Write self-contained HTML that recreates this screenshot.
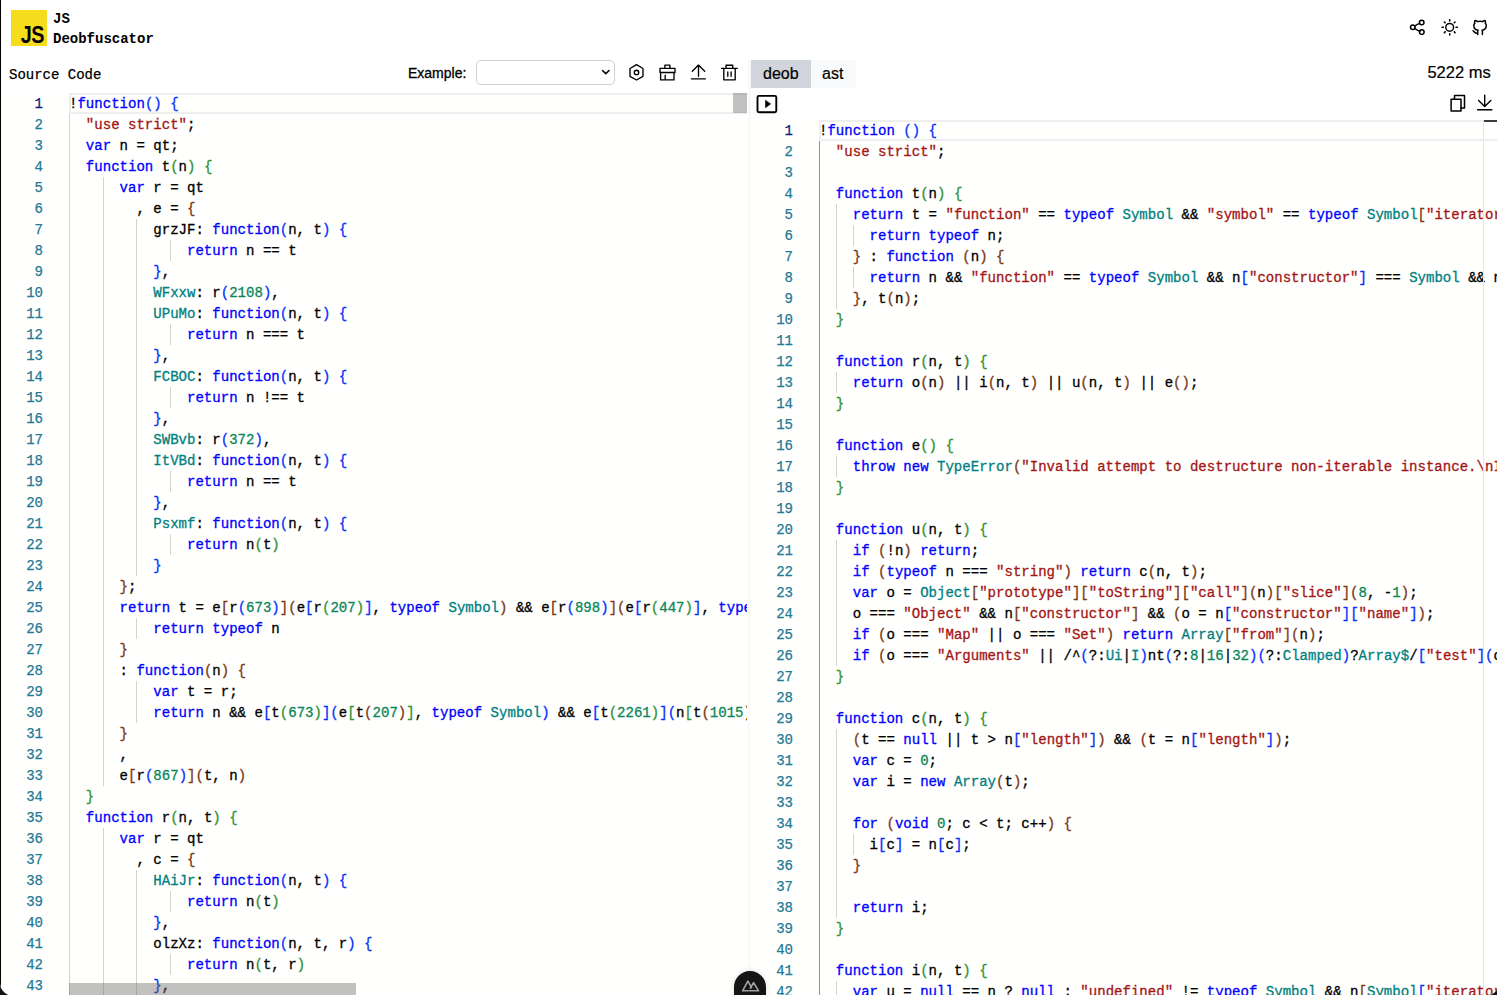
<!DOCTYPE html>
<html><head><meta charset="utf-8">
<style>
html,body{margin:0;padding:0;}
body{width:1497px;height:995px;overflow:hidden;background:#141414;position:relative;font-family:"Liberation Sans",sans-serif;}
#win{position:absolute;left:0;top:0;width:1498.7px;height:995.5px;background:#fff;border-bottom-left-radius:15px 13px;border-bottom-right-radius:15px 13px;overflow:hidden;}
.abs{position:absolute;}
.mono{font-family:"Liberation Mono",monospace;}
#logo{left:11px;top:10px;width:36px;height:36px;background:#f5dd1e;}
#logo span{position:absolute;right:3px;bottom:-1px;font:bold 23px/1 "Liberation Sans",sans-serif;color:#000;letter-spacing:-0.5px;transform:scaleX(0.86);transform-origin:right bottom;}
#title{left:53px;top:9px;font:bold 14px/20px "Liberation Mono",monospace;color:#000;}
.ed{position:absolute;overflow:hidden;background:#fffffe;font:14.05px/21px "Liberation Mono",monospace;}
.ed .ln{position:absolute;margin-top:1px;left:0;width:43px;text-align:right;color:#237893;height:21px;-webkit-text-stroke:0.25px currentColor;}
.ed .ln.act{color:#0b216f;}
.ed .cur{position:absolute;left:69px;top:0;right:0;height:17px;border:2px solid #eeeeee;border-right:0;}
.ed .gd{position:absolute;width:1px;height:21px;background:#d3d3d3;}
.ed .ga{background:#939393;}
.ed .cl{position:absolute;margin-top:1px;left:69px;white-space:pre;height:21px;color:#000;-webkit-text-stroke:0.3px currentColor;}
.ed i{font-style:normal;}
.c0000ff{color:#0000ff}.ca31515{color:#a31515}.c098658{color:#098658}.c008080{color:#008080}
.c0431fa{color:#0431fa}.c319331{color:#319331}.c7b3814{color:#7b3814}
#edL{left:0;top:93px;width:747px;height:903px;}
#edR{left:750px;top:120px;width:748px;height:876px;}
#vslL{left:733px;top:0;width:14px;height:20px;background:rgba(100,100,100,.4);}
#hslL{left:69px;top:890px;width:287px;height:12px;background:rgba(100,100,100,.4);}
#ovR{left:733px;top:0;width:1px;height:876px;background:#e6e6e6;}
#ovMark{left:734px;top:0;width:14px;height:2px;background:#3c3c3c;}
#splitter{left:748px;top:60px;width:3px;height:936px;background:#f9f9fa;}
#srcLabel{left:9px;top:65px;font:14px/20px "Liberation Mono",monospace;color:#000;-webkit-text-stroke:0.25px #000;}
#exLabel{left:408px;top:65px;font:14px/16px "Liberation Sans",sans-serif;color:#000;-webkit-text-stroke:0.3px #000;}
#sel{left:476px;top:60px;width:137px;height:23px;border:1px solid #d0d0d4;border-radius:5px;background:#fff;}
#tabs{left:751px;top:60px;width:105px;height:28px;background:#f9fafb;}
#tabDeob{left:751px;top:60px;width:60px;height:28px;background:#d1d5db;}
.tabt{font:16px/28px "Liberation Sans",sans-serif;color:#000;top:60px;-webkit-text-stroke:0.2px #000;}
#ms{right:8px;top:63px;font:16.5px/19px "Liberation Sans",sans-serif;color:#000;-webkit-text-stroke:0.2px #000;}
#devtools{left:733.7px;top:971px;width:32px;height:40px;border-radius:16px;background:#151515;box-shadow:0 0 6px rgba(0,0,0,.12);}
svg{position:absolute;overflow:visible;}
</style></head><body>
<div id="win">
  <div class="abs" style="left:0;top:0;width:1px;height:996px;background:#000;z-index:9"></div>
  <div id="logo" class="abs"><span>JS</span></div>
  <div id="title" class="abs">JS<br>Deobfuscator</div>

  <svg style="left:0;top:0" width="1497" height="60" viewBox="0 0 1497 60" fill="none" stroke="#000" stroke-width="1.4" stroke-linecap="round" stroke-linejoin="round">
    <g transform="translate(1.3,0)">
    <!-- share -->
    <circle cx="1411.5" cy="27.3" r="2.3" stroke-width="1.5"/>
    <circle cx="1420.4" cy="22.5" r="2.3" stroke-width="1.5"/>
    <circle cx="1420.5" cy="32.1" r="2.3" stroke-width="1.5"/>
    <path d="M1413.3 26.3 Q1416 24 1418.6 23.4 M1413.3 28.3 Q1416 30.6 1418.6 31.2"/>
    <!-- sun -->
    <circle cx="1448.4" cy="27.3" r="3.9" stroke-width="1.45"/>
    <path stroke-width="1.6" d="M1440.8 27.3h1.2 M1454.8 27.3h1.2 M1448.4 19.7v1.2 M1448.4 33.7v1.2 M1443.1 22l.7 .7 M1453.7 22l-.7 .7 M1443.1 32.6l.7 -.7 M1453.7 32.6l-.7 -.7"/>
    <!-- github -->
    <g transform="translate(1469.4,18.2) scale(0.78)" stroke-width="1.9">
      <path d="M9 19c-4.3 1.4 -4.3 -2.5 -6 -3m12 5v-3.5c0 -1 .1 -1.4 -.5 -2c2.8 -.3 5.5 -1.4 5.5 -6a4.6 4.6 0 0 0 -1.3 -3.2a4.2 4.2 0 0 0 -.1 -3.2s-1.1 -.3 -3.5 1.3a12.3 12.3 0 0 0 -6.2 0c-2.4 -1.6 -3.5 -1.3 -3.5 -1.3a4.2 4.2 0 0 0 -.1 3.2a4.6 4.6 0 0 0 -1.3 3.2c0 4.6 2.7 5.7 5.5 6c-.6 .6 -.6 1.2 -.5 2v3.5"/>
    </g>
  </svg>

  <div id="srcLabel" class="abs">Source Code</div>
  <div id="exLabel" class="abs">Example:</div>
  <div id="sel" class="abs"></div>
  <svg style="left:0;top:0" width="1497" height="130" viewBox="0 0 1497 130" fill="none" stroke="#000" stroke-width="1.2" stroke-linecap="round" stroke-linejoin="round">
    <!-- select chevron -->
    <path d="M602.6 70.5l3.2 3.2 3.2-3.2" stroke-width="1.6"/>
    <g transform="translate(1,0)" stroke-width="1.35">
    <!-- hex -->
    <path d="M635.5 64.6 L642 68.5 L642 76.3 L635.5 80 L629 76.3 L629 68.5 Z"/>
    <circle cx="635.5" cy="72.4" r="2.2"/>
    <!-- toolbox -->
    <path d="M663.9 68.3v-3.2h5v3.2 M659 68.3h15v4.2h-15z M659.6 72.5v7.4h13.4v-7.4 M664.2 79.9v-4.8"/>
    <!-- upload -->
    <path d="M691.3 71.3l6.2-6.2 6.2 6.2 M697.5 65.4v10.8 M690.4 78.8h14"/>
    <!-- trash -->
    <path d="M720.6 68.4h15.7 M725 68.4v-3.2h6.7v3.2 M722.8 68.4v11.4h11.4v-11.4 M726.8 72v4.2 M730.1 72v4.2"/>
    </g>
    <!-- play -->
    <rect x="757.5" y="95.9" width="18.8" height="16.4" rx="1.5" stroke-width="1.9"/>
    <path d="M765.5 100.5v7.2l5-3.6z" fill="#000" stroke-width="0.6"/>
    <g transform="translate(1.3,0)">
    <!-- copy -->
    <path d="M1453.2 99.3v-3.7h10v12.3h-3.5" stroke-width="1.5"/>
    <rect x="1449.8" y="99.3" width="9.9" height="11.8" stroke-width="1.5"/>
    <!-- download -->
    <path d="M1483.4 95.3v11.2 M1477.3 100.4l6.1 6.1 6.1-6.1 M1476.3 109.7h14.2" stroke-width="1.4"/>
    </g>
  </svg>

  <div id="tabs" class="abs"></div>
  <div id="tabDeob" class="abs"></div>
  <div class="abs tabt" style="left:763px">deob</div>
  <div class="abs tabt" style="left:822px">ast</div>
  <div id="ms" class="abs">5222 ms</div>
  <div id="splitter" class="abs"></div>

  <div id="edL" class="ed">
<div class="ln act" style="top:0px">1</div>
<div class="ln" style="top:21px">2</div>
<div class="ln" style="top:42px">3</div>
<div class="ln" style="top:63px">4</div>
<div class="ln" style="top:84px">5</div>
<div class="ln" style="top:105px">6</div>
<div class="ln" style="top:126px">7</div>
<div class="ln" style="top:147px">8</div>
<div class="ln" style="top:168px">9</div>
<div class="ln" style="top:189px">10</div>
<div class="ln" style="top:210px">11</div>
<div class="ln" style="top:231px">12</div>
<div class="ln" style="top:252px">13</div>
<div class="ln" style="top:273px">14</div>
<div class="ln" style="top:294px">15</div>
<div class="ln" style="top:315px">16</div>
<div class="ln" style="top:336px">17</div>
<div class="ln" style="top:357px">18</div>
<div class="ln" style="top:378px">19</div>
<div class="ln" style="top:399px">20</div>
<div class="ln" style="top:420px">21</div>
<div class="ln" style="top:441px">22</div>
<div class="ln" style="top:462px">23</div>
<div class="ln" style="top:483px">24</div>
<div class="ln" style="top:504px">25</div>
<div class="ln" style="top:525px">26</div>
<div class="ln" style="top:546px">27</div>
<div class="ln" style="top:567px">28</div>
<div class="ln" style="top:588px">29</div>
<div class="ln" style="top:609px">30</div>
<div class="ln" style="top:630px">31</div>
<div class="ln" style="top:651px">32</div>
<div class="ln" style="top:672px">33</div>
<div class="ln" style="top:693px">34</div>
<div class="ln" style="top:714px">35</div>
<div class="ln" style="top:735px">36</div>
<div class="ln" style="top:756px">37</div>
<div class="ln" style="top:777px">38</div>
<div class="ln" style="top:798px">39</div>
<div class="ln" style="top:819px">40</div>
<div class="ln" style="top:840px">41</div>
<div class="ln" style="top:861px">42</div>
<div class="ln" style="top:882px">43</div>
<div class="cur"></div>
<div class="gd" style="left:69.00px;top:21px"></div>
<div class="gd" style="left:69.00px;top:42px"></div>
<div class="gd" style="left:69.00px;top:63px"></div>
<div class="gd" style="left:69.00px;top:84px"></div>
<div class="gd" style="left:102.72px;top:84px"></div>
<div class="gd" style="left:69.00px;top:105px"></div>
<div class="gd" style="left:102.72px;top:105px"></div>
<div class="gd" style="left:69.00px;top:126px"></div>
<div class="gd" style="left:102.72px;top:126px"></div>
<div class="gd" style="left:136.44px;top:126px"></div>
<div class="gd" style="left:69.00px;top:147px"></div>
<div class="gd" style="left:102.72px;top:147px"></div>
<div class="gd" style="left:136.44px;top:147px"></div>
<div class="gd" style="left:170.16px;top:147px"></div>
<div class="gd" style="left:69.00px;top:168px"></div>
<div class="gd" style="left:102.72px;top:168px"></div>
<div class="gd" style="left:136.44px;top:168px"></div>
<div class="gd" style="left:69.00px;top:189px"></div>
<div class="gd" style="left:102.72px;top:189px"></div>
<div class="gd" style="left:136.44px;top:189px"></div>
<div class="gd" style="left:69.00px;top:210px"></div>
<div class="gd" style="left:102.72px;top:210px"></div>
<div class="gd" style="left:136.44px;top:210px"></div>
<div class="gd" style="left:69.00px;top:231px"></div>
<div class="gd" style="left:102.72px;top:231px"></div>
<div class="gd" style="left:136.44px;top:231px"></div>
<div class="gd" style="left:170.16px;top:231px"></div>
<div class="gd" style="left:69.00px;top:252px"></div>
<div class="gd" style="left:102.72px;top:252px"></div>
<div class="gd" style="left:136.44px;top:252px"></div>
<div class="gd" style="left:69.00px;top:273px"></div>
<div class="gd" style="left:102.72px;top:273px"></div>
<div class="gd" style="left:136.44px;top:273px"></div>
<div class="gd" style="left:69.00px;top:294px"></div>
<div class="gd" style="left:102.72px;top:294px"></div>
<div class="gd" style="left:136.44px;top:294px"></div>
<div class="gd" style="left:170.16px;top:294px"></div>
<div class="gd" style="left:69.00px;top:315px"></div>
<div class="gd" style="left:102.72px;top:315px"></div>
<div class="gd" style="left:136.44px;top:315px"></div>
<div class="gd" style="left:69.00px;top:336px"></div>
<div class="gd" style="left:102.72px;top:336px"></div>
<div class="gd" style="left:136.44px;top:336px"></div>
<div class="gd" style="left:69.00px;top:357px"></div>
<div class="gd" style="left:102.72px;top:357px"></div>
<div class="gd" style="left:136.44px;top:357px"></div>
<div class="gd" style="left:69.00px;top:378px"></div>
<div class="gd" style="left:102.72px;top:378px"></div>
<div class="gd" style="left:136.44px;top:378px"></div>
<div class="gd" style="left:170.16px;top:378px"></div>
<div class="gd" style="left:69.00px;top:399px"></div>
<div class="gd" style="left:102.72px;top:399px"></div>
<div class="gd" style="left:136.44px;top:399px"></div>
<div class="gd" style="left:69.00px;top:420px"></div>
<div class="gd" style="left:102.72px;top:420px"></div>
<div class="gd" style="left:136.44px;top:420px"></div>
<div class="gd" style="left:69.00px;top:441px"></div>
<div class="gd" style="left:102.72px;top:441px"></div>
<div class="gd" style="left:136.44px;top:441px"></div>
<div class="gd" style="left:170.16px;top:441px"></div>
<div class="gd" style="left:69.00px;top:462px"></div>
<div class="gd" style="left:102.72px;top:462px"></div>
<div class="gd" style="left:136.44px;top:462px"></div>
<div class="gd" style="left:69.00px;top:483px"></div>
<div class="gd" style="left:102.72px;top:483px"></div>
<div class="gd" style="left:69.00px;top:504px"></div>
<div class="gd" style="left:102.72px;top:504px"></div>
<div class="gd" style="left:69.00px;top:525px"></div>
<div class="gd" style="left:102.72px;top:525px"></div>
<div class="gd" style="left:136.44px;top:525px"></div>
<div class="gd" style="left:69.00px;top:546px"></div>
<div class="gd" style="left:102.72px;top:546px"></div>
<div class="gd" style="left:69.00px;top:567px"></div>
<div class="gd" style="left:102.72px;top:567px"></div>
<div class="gd" style="left:69.00px;top:588px"></div>
<div class="gd" style="left:102.72px;top:588px"></div>
<div class="gd" style="left:136.44px;top:588px"></div>
<div class="gd" style="left:69.00px;top:609px"></div>
<div class="gd" style="left:102.72px;top:609px"></div>
<div class="gd" style="left:136.44px;top:609px"></div>
<div class="gd" style="left:69.00px;top:630px"></div>
<div class="gd" style="left:102.72px;top:630px"></div>
<div class="gd" style="left:69.00px;top:651px"></div>
<div class="gd" style="left:102.72px;top:651px"></div>
<div class="gd" style="left:69.00px;top:672px"></div>
<div class="gd" style="left:102.72px;top:672px"></div>
<div class="gd" style="left:69.00px;top:693px"></div>
<div class="gd" style="left:69.00px;top:714px"></div>
<div class="gd" style="left:69.00px;top:735px"></div>
<div class="gd" style="left:102.72px;top:735px"></div>
<div class="gd" style="left:69.00px;top:756px"></div>
<div class="gd" style="left:102.72px;top:756px"></div>
<div class="gd" style="left:69.00px;top:777px"></div>
<div class="gd" style="left:102.72px;top:777px"></div>
<div class="gd" style="left:136.44px;top:777px"></div>
<div class="gd" style="left:69.00px;top:798px"></div>
<div class="gd" style="left:102.72px;top:798px"></div>
<div class="gd" style="left:136.44px;top:798px"></div>
<div class="gd" style="left:170.16px;top:798px"></div>
<div class="gd" style="left:69.00px;top:819px"></div>
<div class="gd" style="left:102.72px;top:819px"></div>
<div class="gd" style="left:136.44px;top:819px"></div>
<div class="gd" style="left:69.00px;top:840px"></div>
<div class="gd" style="left:102.72px;top:840px"></div>
<div class="gd" style="left:136.44px;top:840px"></div>
<div class="gd" style="left:69.00px;top:861px"></div>
<div class="gd" style="left:102.72px;top:861px"></div>
<div class="gd" style="left:136.44px;top:861px"></div>
<div class="gd" style="left:170.16px;top:861px"></div>
<div class="gd" style="left:69.00px;top:882px"></div>
<div class="gd" style="left:102.72px;top:882px"></div>
<div class="gd" style="left:136.44px;top:882px"></div>
<div class="cl" style="top:0px">!<i class="c0000ff">function</i><i class="c0431fa">() {</i></div>
<div class="cl" style="top:21px"><i class="ca31515">  "use strict"</i>;</div>
<div class="cl" style="top:42px"><i class="c0000ff">  var </i>n = qt;</div>
<div class="cl" style="top:63px"><i class="c0000ff">  function </i>t<i class="c319331">(</i>n<i class="c319331">) {</i></div>
<div class="cl" style="top:84px"><i class="c0000ff">      var </i>r = qt</div>
<div class="cl" style="top:105px">        , e = <i class="c7b3814">{</i></div>
<div class="cl" style="top:126px">          grzJF: <i class="c0000ff">function</i><i class="c0431fa">(</i>n, t<i class="c0431fa">) {</i></div>
<div class="cl" style="top:147px"><i class="c0000ff">              return </i>n == t</div>
<div class="cl" style="top:168px"><i class="c0431fa">          }</i>,</div>
<div class="cl" style="top:189px"><i class="c008080">          WFxxw</i>: r<i class="c0431fa">(</i><i class="c098658">2108</i><i class="c0431fa">)</i>,</div>
<div class="cl" style="top:210px"><i class="c008080">          UPuMo</i>: <i class="c0000ff">function</i><i class="c0431fa">(</i>n, t<i class="c0431fa">) {</i></div>
<div class="cl" style="top:231px"><i class="c0000ff">              return </i>n === t</div>
<div class="cl" style="top:252px"><i class="c0431fa">          }</i>,</div>
<div class="cl" style="top:273px"><i class="c008080">          FCBOC</i>: <i class="c0000ff">function</i><i class="c0431fa">(</i>n, t<i class="c0431fa">) {</i></div>
<div class="cl" style="top:294px"><i class="c0000ff">              return </i>n !== t</div>
<div class="cl" style="top:315px"><i class="c0431fa">          }</i>,</div>
<div class="cl" style="top:336px"><i class="c008080">          SWBvb</i>: r<i class="c0431fa">(</i><i class="c098658">372</i><i class="c0431fa">)</i>,</div>
<div class="cl" style="top:357px"><i class="c008080">          ItVBd</i>: <i class="c0000ff">function</i><i class="c0431fa">(</i>n, t<i class="c0431fa">) {</i></div>
<div class="cl" style="top:378px"><i class="c0000ff">              return </i>n == t</div>
<div class="cl" style="top:399px"><i class="c0431fa">          }</i>,</div>
<div class="cl" style="top:420px"><i class="c008080">          Psxmf</i>: <i class="c0000ff">function</i><i class="c0431fa">(</i>n, t<i class="c0431fa">) {</i></div>
<div class="cl" style="top:441px"><i class="c0000ff">              return </i>n<i class="c319331">(</i>t<i class="c319331">)</i></div>
<div class="cl" style="top:462px"><i class="c0431fa">          }</i></div>
<div class="cl" style="top:483px"><i class="c7b3814">      }</i>;</div>
<div class="cl" style="top:504px"><i class="c0000ff">      return </i>t = e<i class="c7b3814">[</i>r<i class="c0431fa">(</i><i class="c098658">673</i><i class="c0431fa">)</i><i class="c7b3814">](</i>e<i class="c0431fa">[</i>r<i class="c319331">(</i><i class="c098658">207</i><i class="c319331">)</i><i class="c0431fa">]</i>, <i class="c0000ff">typeof </i><i class="c008080">Symbol</i><i class="c7b3814">) </i>&amp;&amp; e<i class="c7b3814">[</i>r<i class="c0431fa">(</i><i class="c098658">898</i><i class="c0431fa">)</i><i class="c7b3814">](</i>e<i class="c0431fa">[</i>r<i class="c319331">(</i><i class="c098658">447</i><i class="c319331">)</i><i class="c0431fa">]</i>, <i class="c0000ff">typeo</i></div>
<div class="cl" style="top:525px"><i class="c0000ff">          return typeof </i>n</div>
<div class="cl" style="top:546px"><i class="c7b3814">      }</i></div>
<div class="cl" style="top:567px">      : <i class="c0000ff">function</i><i class="c7b3814">(</i>n<i class="c7b3814">) {</i></div>
<div class="cl" style="top:588px"><i class="c0000ff">          var </i>t = r;</div>
<div class="cl" style="top:609px"><i class="c0000ff">          return </i>n &amp;&amp; e<i class="c0431fa">[</i>t<i class="c319331">(</i><i class="c098658">673</i><i class="c319331">)</i><i class="c0431fa">](</i>e<i class="c319331">[</i>t<i class="c7b3814">(</i><i class="c098658">207</i><i class="c7b3814">)</i><i class="c319331">]</i>, <i class="c0000ff">typeof </i><i class="c008080">Symbol</i><i class="c0431fa">) </i>&amp;&amp; e<i class="c0431fa">[</i>t<i class="c319331">(</i><i class="c098658">2261</i><i class="c319331">)</i><i class="c0431fa">](</i>n<i class="c319331">[</i>t<i class="c7b3814">(</i><i class="c098658">1015</i><i class="c7b3814">)</i><i class="c319331">]</i></div>
<div class="cl" style="top:630px"><i class="c7b3814">      }</i></div>
<div class="cl" style="top:651px">      ,</div>
<div class="cl" style="top:672px">      e<i class="c7b3814">[</i>r<i class="c0431fa">(</i><i class="c098658">867</i><i class="c0431fa">)</i><i class="c7b3814">](</i>t, n<i class="c7b3814">)</i></div>
<div class="cl" style="top:693px"><i class="c319331">  }</i></div>
<div class="cl" style="top:714px"><i class="c0000ff">  function </i>r<i class="c319331">(</i>n, t<i class="c319331">) {</i></div>
<div class="cl" style="top:735px"><i class="c0000ff">      var </i>r = qt</div>
<div class="cl" style="top:756px">        , c = <i class="c7b3814">{</i></div>
<div class="cl" style="top:777px"><i class="c008080">          HAiJr</i>: <i class="c0000ff">function</i><i class="c0431fa">(</i>n, t<i class="c0431fa">) {</i></div>
<div class="cl" style="top:798px"><i class="c0000ff">              return </i>n<i class="c319331">(</i>t<i class="c319331">)</i></div>
<div class="cl" style="top:819px"><i class="c0431fa">          }</i>,</div>
<div class="cl" style="top:840px">          olzXz: <i class="c0000ff">function</i><i class="c0431fa">(</i>n, t, r<i class="c0431fa">) {</i></div>
<div class="cl" style="top:861px"><i class="c0000ff">              return </i>n<i class="c319331">(</i>t, r<i class="c319331">)</i></div>
<div class="cl" style="top:882px"><i class="c0431fa">          }</i>,</div>
  <div id="vslL" class="abs"></div>
  <div id="hslL" class="abs"></div>
  </div>

  <div id="edR" class="ed">
<div class="ln act" style="top:0px">1</div>
<div class="ln" style="top:21px">2</div>
<div class="ln" style="top:42px">3</div>
<div class="ln" style="top:63px">4</div>
<div class="ln" style="top:84px">5</div>
<div class="ln" style="top:105px">6</div>
<div class="ln" style="top:126px">7</div>
<div class="ln" style="top:147px">8</div>
<div class="ln" style="top:168px">9</div>
<div class="ln" style="top:189px">10</div>
<div class="ln" style="top:210px">11</div>
<div class="ln" style="top:231px">12</div>
<div class="ln" style="top:252px">13</div>
<div class="ln" style="top:273px">14</div>
<div class="ln" style="top:294px">15</div>
<div class="ln" style="top:315px">16</div>
<div class="ln" style="top:336px">17</div>
<div class="ln" style="top:357px">18</div>
<div class="ln" style="top:378px">19</div>
<div class="ln" style="top:399px">20</div>
<div class="ln" style="top:420px">21</div>
<div class="ln" style="top:441px">22</div>
<div class="ln" style="top:462px">23</div>
<div class="ln" style="top:483px">24</div>
<div class="ln" style="top:504px">25</div>
<div class="ln" style="top:525px">26</div>
<div class="ln" style="top:546px">27</div>
<div class="ln" style="top:567px">28</div>
<div class="ln" style="top:588px">29</div>
<div class="ln" style="top:609px">30</div>
<div class="ln" style="top:630px">31</div>
<div class="ln" style="top:651px">32</div>
<div class="ln" style="top:672px">33</div>
<div class="ln" style="top:693px">34</div>
<div class="ln" style="top:714px">35</div>
<div class="ln" style="top:735px">36</div>
<div class="ln" style="top:756px">37</div>
<div class="ln" style="top:777px">38</div>
<div class="ln" style="top:798px">39</div>
<div class="ln" style="top:819px">40</div>
<div class="ln" style="top:840px">41</div>
<div class="ln" style="top:861px">42</div>
<div class="cur"></div>
<div class="gd ga" style="left:69.00px;top:21px"></div>
<div class="gd ga" style="left:69.00px;top:42px"></div>
<div class="gd ga" style="left:69.00px;top:63px"></div>
<div class="gd ga" style="left:69.00px;top:84px"></div>
<div class="gd" style="left:85.86px;top:84px"></div>
<div class="gd ga" style="left:69.00px;top:105px"></div>
<div class="gd" style="left:85.86px;top:105px"></div>
<div class="gd" style="left:102.72px;top:105px"></div>
<div class="gd ga" style="left:69.00px;top:126px"></div>
<div class="gd" style="left:85.86px;top:126px"></div>
<div class="gd ga" style="left:69.00px;top:147px"></div>
<div class="gd" style="left:85.86px;top:147px"></div>
<div class="gd" style="left:102.72px;top:147px"></div>
<div class="gd ga" style="left:69.00px;top:168px"></div>
<div class="gd" style="left:85.86px;top:168px"></div>
<div class="gd ga" style="left:69.00px;top:189px"></div>
<div class="gd ga" style="left:69.00px;top:210px"></div>
<div class="gd ga" style="left:69.00px;top:231px"></div>
<div class="gd ga" style="left:69.00px;top:252px"></div>
<div class="gd" style="left:85.86px;top:252px"></div>
<div class="gd ga" style="left:69.00px;top:273px"></div>
<div class="gd ga" style="left:69.00px;top:294px"></div>
<div class="gd ga" style="left:69.00px;top:315px"></div>
<div class="gd ga" style="left:69.00px;top:336px"></div>
<div class="gd" style="left:85.86px;top:336px"></div>
<div class="gd ga" style="left:69.00px;top:357px"></div>
<div class="gd ga" style="left:69.00px;top:378px"></div>
<div class="gd ga" style="left:69.00px;top:399px"></div>
<div class="gd ga" style="left:69.00px;top:420px"></div>
<div class="gd" style="left:85.86px;top:420px"></div>
<div class="gd ga" style="left:69.00px;top:441px"></div>
<div class="gd" style="left:85.86px;top:441px"></div>
<div class="gd ga" style="left:69.00px;top:462px"></div>
<div class="gd" style="left:85.86px;top:462px"></div>
<div class="gd ga" style="left:69.00px;top:483px"></div>
<div class="gd" style="left:85.86px;top:483px"></div>
<div class="gd ga" style="left:69.00px;top:504px"></div>
<div class="gd" style="left:85.86px;top:504px"></div>
<div class="gd ga" style="left:69.00px;top:525px"></div>
<div class="gd" style="left:85.86px;top:525px"></div>
<div class="gd ga" style="left:69.00px;top:546px"></div>
<div class="gd ga" style="left:69.00px;top:567px"></div>
<div class="gd ga" style="left:69.00px;top:588px"></div>
<div class="gd ga" style="left:69.00px;top:609px"></div>
<div class="gd" style="left:85.86px;top:609px"></div>
<div class="gd ga" style="left:69.00px;top:630px"></div>
<div class="gd" style="left:85.86px;top:630px"></div>
<div class="gd ga" style="left:69.00px;top:651px"></div>
<div class="gd" style="left:85.86px;top:651px"></div>
<div class="gd ga" style="left:69.00px;top:672px"></div>
<div class="gd" style="left:85.86px;top:672px"></div>
<div class="gd ga" style="left:69.00px;top:693px"></div>
<div class="gd" style="left:85.86px;top:693px"></div>
<div class="gd ga" style="left:69.00px;top:714px"></div>
<div class="gd" style="left:85.86px;top:714px"></div>
<div class="gd" style="left:102.72px;top:714px"></div>
<div class="gd ga" style="left:69.00px;top:735px"></div>
<div class="gd" style="left:85.86px;top:735px"></div>
<div class="gd ga" style="left:69.00px;top:756px"></div>
<div class="gd" style="left:85.86px;top:756px"></div>
<div class="gd ga" style="left:69.00px;top:777px"></div>
<div class="gd" style="left:85.86px;top:777px"></div>
<div class="gd ga" style="left:69.00px;top:798px"></div>
<div class="gd ga" style="left:69.00px;top:819px"></div>
<div class="gd ga" style="left:69.00px;top:840px"></div>
<div class="gd ga" style="left:69.00px;top:861px"></div>
<div class="gd" style="left:85.86px;top:861px"></div>
<div class="cl" style="top:0px">!<i class="c0000ff">function </i><i class="c0431fa">() {</i></div>
<div class="cl" style="top:21px"><i class="ca31515">  "use strict"</i>;</div>
<div class="cl" style="top:42px"></div>
<div class="cl" style="top:63px"><i class="c0000ff">  function </i>t<i class="c319331">(</i>n<i class="c319331">) {</i></div>
<div class="cl" style="top:84px"><i class="c0000ff">    return </i>t = <i class="ca31515">"function" </i>== <i class="c0000ff">typeof </i><i class="c008080">Symbol </i>&amp;&amp; <i class="ca31515">"symbol" </i>== <i class="c0000ff">typeof </i><i class="c008080">Symbol</i><i class="c7b3814">[</i><i class="ca31515">"iterator"</i></div>
<div class="cl" style="top:105px"><i class="c0000ff">      return typeof </i>n;</div>
<div class="cl" style="top:126px"><i class="c7b3814">    } </i>: <i class="c0000ff">function </i><i class="c7b3814">(</i>n<i class="c7b3814">) {</i></div>
<div class="cl" style="top:147px"><i class="c0000ff">      return </i>n &amp;&amp; <i class="ca31515">"function" </i>== <i class="c0000ff">typeof </i><i class="c008080">Symbol </i>&amp;&amp; n<i class="c0431fa">[</i><i class="ca31515">"constructor"</i><i class="c0431fa">] </i>=== <i class="c008080">Symbol </i>&amp;&amp; n </div>
<div class="cl" style="top:168px"><i class="c7b3814">    }</i>, t<i class="c7b3814">(</i>n<i class="c7b3814">)</i>;</div>
<div class="cl" style="top:189px"><i class="c319331">  }</i></div>
<div class="cl" style="top:210px"></div>
<div class="cl" style="top:231px"><i class="c0000ff">  function </i>r<i class="c319331">(</i>n, t<i class="c319331">) {</i></div>
<div class="cl" style="top:252px"><i class="c0000ff">    return </i>o<i class="c7b3814">(</i>n<i class="c7b3814">) </i>|| i<i class="c7b3814">(</i>n, t<i class="c7b3814">) </i>|| u<i class="c7b3814">(</i>n, t<i class="c7b3814">) </i>|| e<i class="c7b3814">()</i>;</div>
<div class="cl" style="top:273px"><i class="c319331">  }</i></div>
<div class="cl" style="top:294px"></div>
<div class="cl" style="top:315px"><i class="c0000ff">  function </i>e<i class="c319331">() {</i></div>
<div class="cl" style="top:336px"><i class="c0000ff">    throw new </i><i class="c008080">TypeError</i><i class="c7b3814">(</i><i class="ca31515">"Invalid attempt to destructure non-iterable instance.\nIn</i></div>
<div class="cl" style="top:357px"><i class="c319331">  }</i></div>
<div class="cl" style="top:378px"></div>
<div class="cl" style="top:399px"><i class="c0000ff">  function </i>u<i class="c319331">(</i>n, t<i class="c319331">) {</i></div>
<div class="cl" style="top:420px"><i class="c0000ff">    if </i><i class="c7b3814">(</i>!n<i class="c7b3814">) </i><i class="c0000ff">return</i>;</div>
<div class="cl" style="top:441px"><i class="c0000ff">    if </i><i class="c7b3814">(</i><i class="c0000ff">typeof </i>n === <i class="ca31515">"string"</i><i class="c7b3814">) </i><i class="c0000ff">return </i>c<i class="c7b3814">(</i>n, t<i class="c7b3814">)</i>;</div>
<div class="cl" style="top:462px"><i class="c0000ff">    var </i>o = <i class="c008080">Object</i><i class="c7b3814">[</i><i class="ca31515">"prototype"</i><i class="c7b3814">][</i><i class="ca31515">"toString"</i><i class="c7b3814">][</i><i class="ca31515">"call"</i><i class="c7b3814">](</i>n<i class="c7b3814">)[</i><i class="ca31515">"slice"</i><i class="c7b3814">](</i><i class="c098658">8</i>, -<i class="c098658">1</i><i class="c7b3814">)</i>;</div>
<div class="cl" style="top:483px">    o === <i class="ca31515">"Object" </i>&amp;&amp; n<i class="c7b3814">[</i><i class="ca31515">"constructor"</i><i class="c7b3814">] </i>&amp;&amp; <i class="c7b3814">(</i>o = n<i class="c0431fa">[</i><i class="ca31515">"constructor"</i><i class="c0431fa">][</i><i class="ca31515">"name"</i><i class="c0431fa">]</i><i class="c7b3814">)</i>;</div>
<div class="cl" style="top:504px"><i class="c0000ff">    if </i><i class="c7b3814">(</i>o === <i class="ca31515">"Map" </i>|| o === <i class="ca31515">"Set"</i><i class="c7b3814">) </i><i class="c0000ff">return </i><i class="c008080">Array</i><i class="c7b3814">[</i><i class="ca31515">"from"</i><i class="c7b3814">](</i>n<i class="c7b3814">)</i>;</div>
<div class="cl" style="top:525px"><i class="c0000ff">    if </i><i class="c7b3814">(</i>o === <i class="ca31515">"Arguments" </i>|| /^<i class="c0431fa">(</i>?:<i class="c008080">Ui</i>|<i class="c008080">I</i><i class="c0431fa">)</i>nt<i class="c0431fa">(</i>?:<i class="c098658">8</i>|<i class="c098658">16</i>|<i class="c098658">32</i><i class="c0431fa">)(</i>?:<i class="c008080">Clamped</i><i class="c0431fa">)</i>?<i class="c008080">Array$</i>/<i class="c0431fa">[</i><i class="ca31515">"test"</i><i class="c0431fa">](</i>o<i class="c0431fa">)</i></div>
<div class="cl" style="top:546px"><i class="c319331">  }</i></div>
<div class="cl" style="top:567px"></div>
<div class="cl" style="top:588px"><i class="c0000ff">  function </i>c<i class="c319331">(</i>n, t<i class="c319331">) {</i></div>
<div class="cl" style="top:609px"><i class="c7b3814">    (</i>t == <i class="c0000ff">null </i>|| t &gt; n<i class="c0431fa">[</i><i class="ca31515">"length"</i><i class="c0431fa">]</i><i class="c7b3814">) </i>&amp;&amp; <i class="c7b3814">(</i>t = n<i class="c0431fa">[</i><i class="ca31515">"length"</i><i class="c0431fa">]</i><i class="c7b3814">)</i>;</div>
<div class="cl" style="top:630px"><i class="c0000ff">    var </i>c = <i class="c098658">0</i>;</div>
<div class="cl" style="top:651px"><i class="c0000ff">    var </i>i = <i class="c0000ff">new </i><i class="c008080">Array</i><i class="c7b3814">(</i>t<i class="c7b3814">)</i>;</div>
<div class="cl" style="top:672px"></div>
<div class="cl" style="top:693px"><i class="c0000ff">    for </i><i class="c7b3814">(</i><i class="c0000ff">void </i><i class="c098658">0</i>; c &lt; t; c++<i class="c7b3814">) {</i></div>
<div class="cl" style="top:714px">      i<i class="c0431fa">[</i>c<i class="c0431fa">] </i>= n<i class="c0431fa">[</i>c<i class="c0431fa">]</i>;</div>
<div class="cl" style="top:735px"><i class="c7b3814">    }</i></div>
<div class="cl" style="top:756px"></div>
<div class="cl" style="top:777px"><i class="c0000ff">    return </i>i;</div>
<div class="cl" style="top:798px"><i class="c319331">  }</i></div>
<div class="cl" style="top:819px"></div>
<div class="cl" style="top:840px"><i class="c0000ff">  function </i>i<i class="c319331">(</i>n, t<i class="c319331">) {</i></div>
<div class="cl" style="top:861px"><i class="c0000ff">    var </i>u = <i class="c0000ff">null </i>== n ? <i class="c0000ff">null </i>: <i class="ca31515">"undefined" </i>!= <i class="c0000ff">typeof </i><i class="c008080">Symbol </i>&amp;&amp; n<i class="c7b3814">[</i><i class="c008080">Symbol</i><i class="c0431fa">[</i><i class="ca31515">"iterator"</i></div>
  <div id="ovR" class="abs"></div>
  <div id="ovMark" class="abs"></div>
  </div>

  <div id="devtools" class="abs">
    <svg style="left:0;top:0" width="32" height="24" viewBox="0 0 32 24" fill="none" stroke="#a3a3a3" stroke-width="1.6" stroke-linejoin="round" stroke-linecap="round">
      <path d="M8.6 19.8 L13.9 10.2 L17.6 16.6 M15.6 19.8 L24.6 19.8 L19.6 11.6 L16.3 17.2 M8.6 19.8 L14.2 19.8"/>
    </svg>
  </div>
</div>
</body></html>
